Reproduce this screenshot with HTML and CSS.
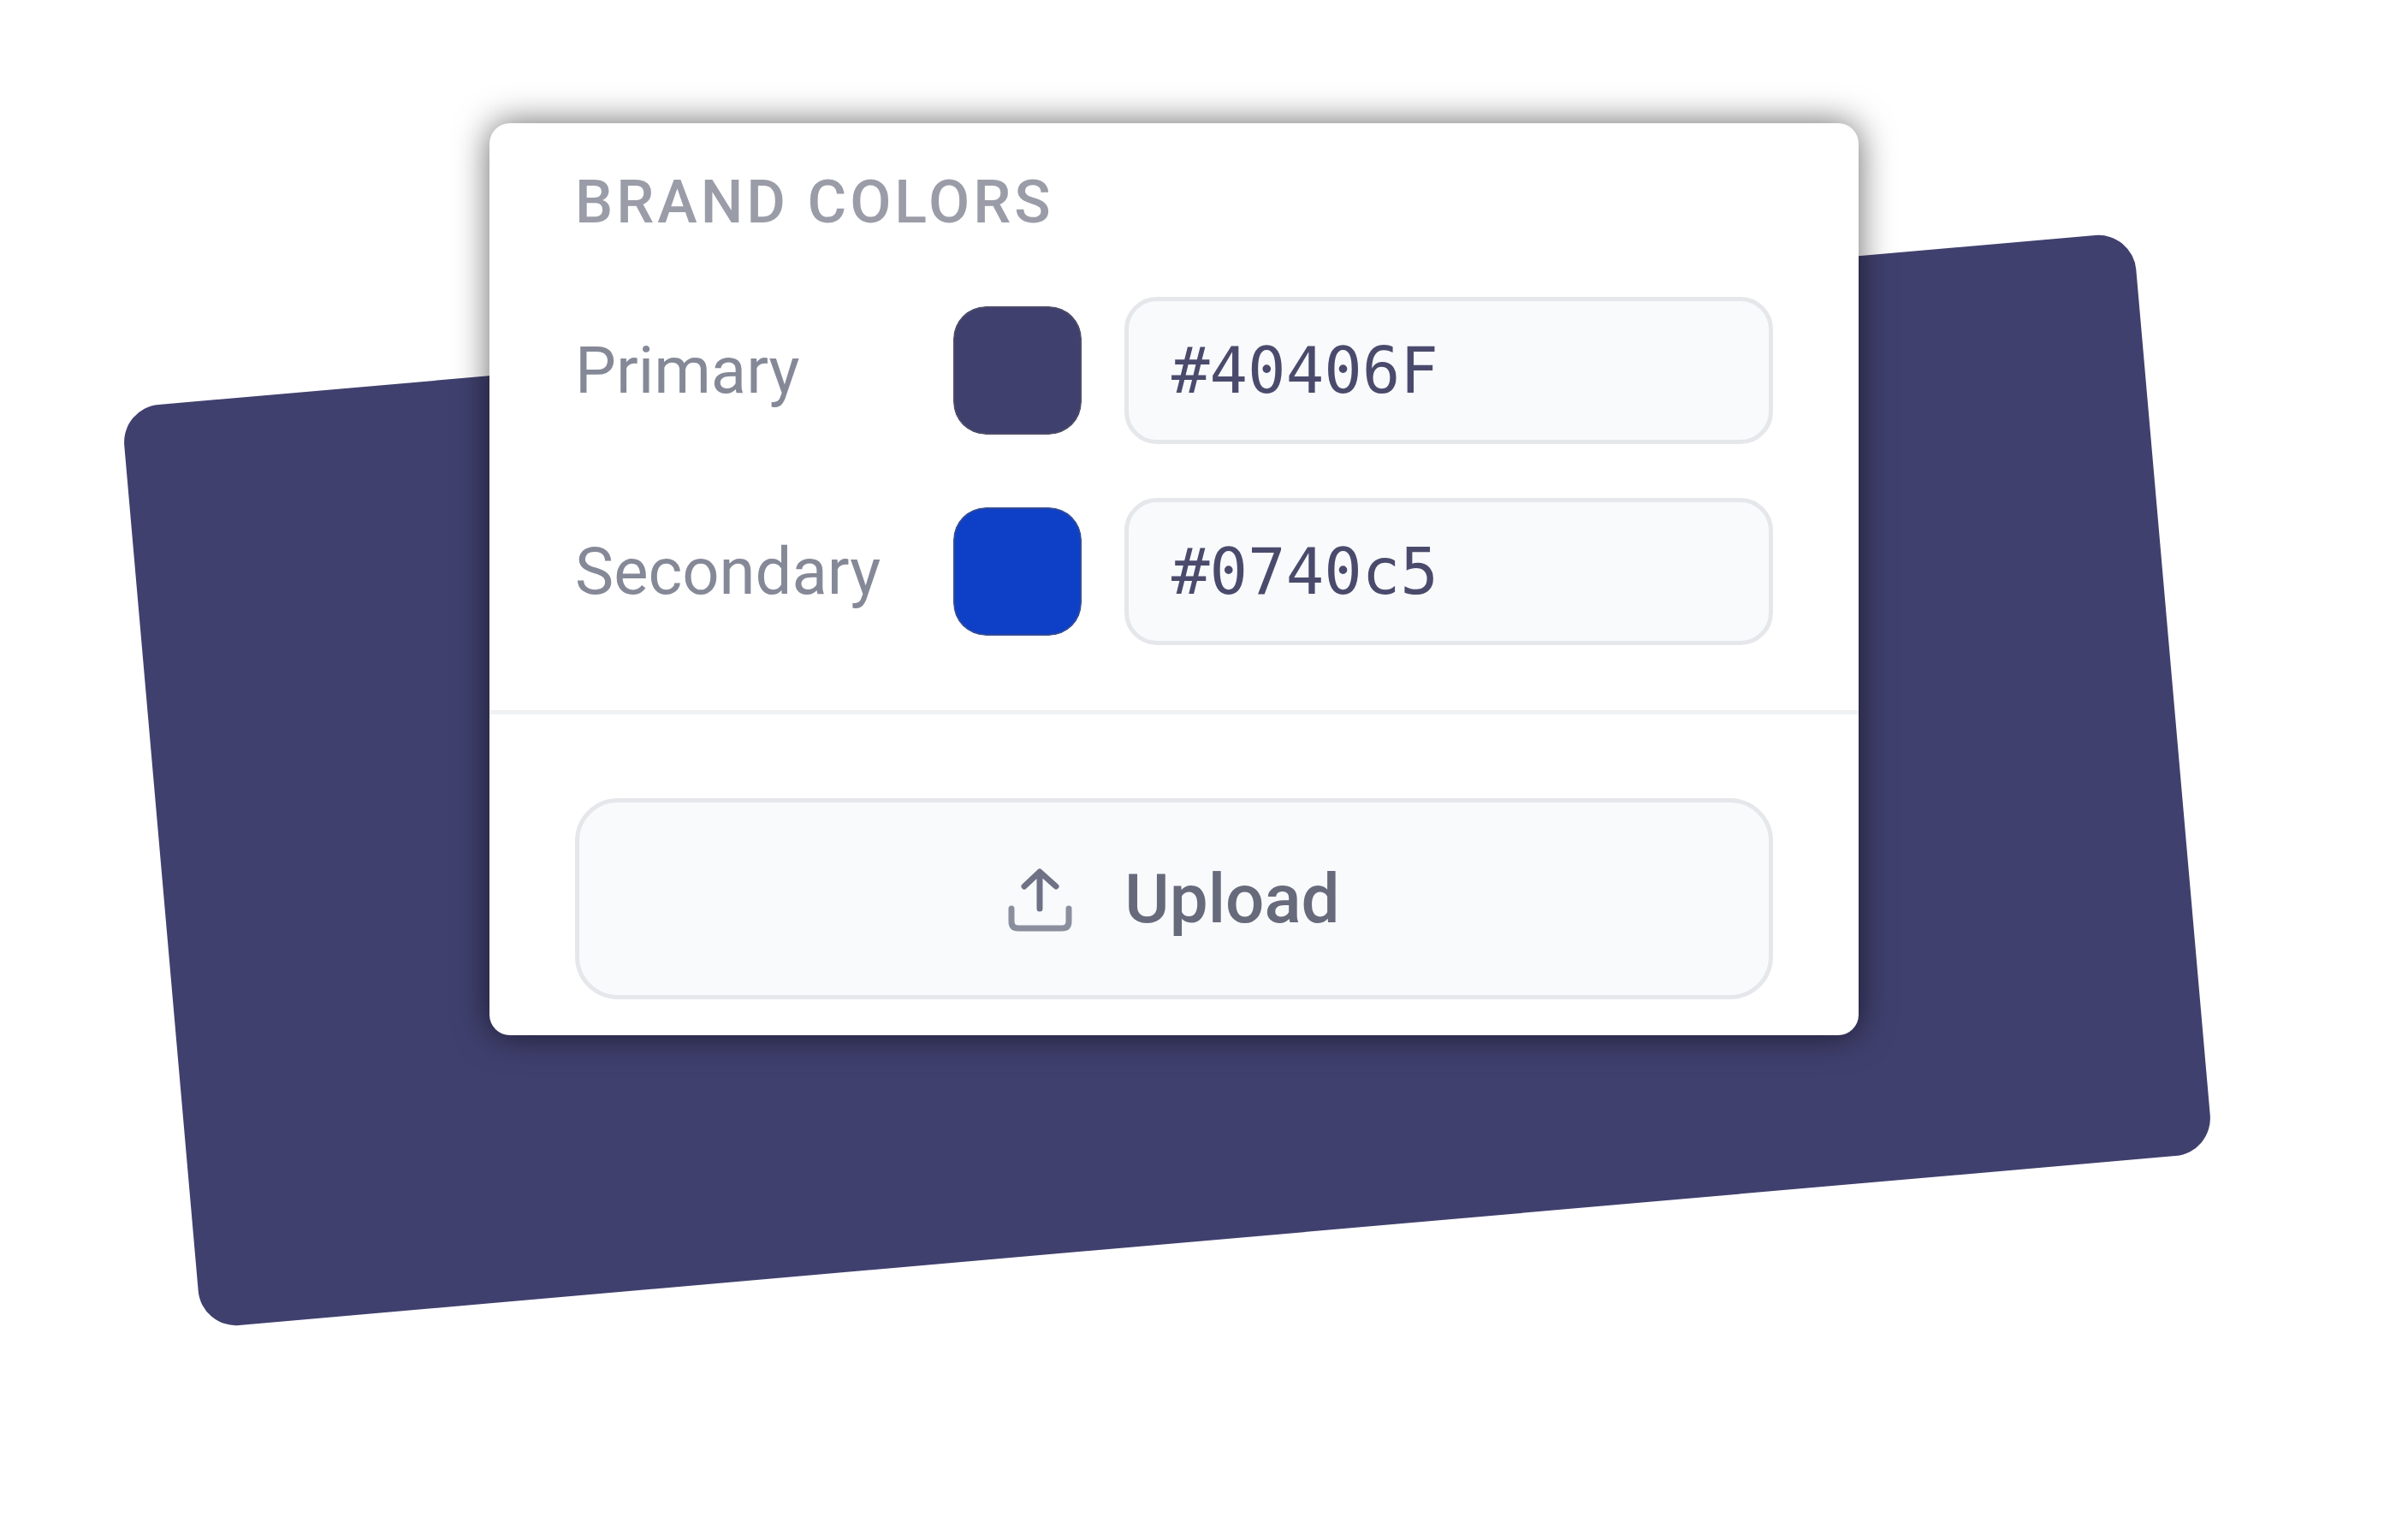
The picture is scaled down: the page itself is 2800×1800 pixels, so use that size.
FILE: index.html
```html
<!DOCTYPE html>
<html lang="en">
<head>
    <meta charset="UTF-8">
    <meta name="viewport" content="width=device-width, initial-scale=1.0">
    <title>Brand Colors</title>
    <link rel="stylesheet" href="styles.css">
</head>
<body>
    <main class="stage">
        <div class="backdrop"></div>
        <div class="panel">
            <section class="colors">
                <h2>BRAND COLORS</h2>
                <div class="color-row">
                    <label for="primary">Primary</label>
                    <input class="swatch" type="color" value="#40406f" aria-label="Primary color">
                    <input class="hex" id="primary" type="text" value="#40406F" spellcheck="false">
                </div>
                <div class="color-row">
                    <label for="secondary">Secondary</label>
                    <input class="swatch" type="color" value="#0e40c7" aria-label="Secondary color">
                    <input class="hex" id="secondary" type="text" value="#0740c5" spellcheck="false">
                </div>
            </section>
            <section class="upload">
                <button class="upload-button" type="button">
                    <svg class="upload-icon" viewBox="0 0 76 76" aria-hidden="true">
                        <path d="M4 49V64Q4 72 12 72H63Q71 72 71 64V49"/>
                        <path class="arrow" d="M37 49V7M19 23L37 6L56 23"/>
                    </svg>
                    <span>Upload</span>
                </button>
            </section>
        </div>
    </main>
</body>
</html>
```
FILE: styles.css
```css
* {
    box-sizing: border-box;
}
body {
    margin: 0;
    background: #ffffff;
    font-family: Roboto, sans-serif;
}
.stage {
    display: grid;
    align-items: start;
    min-height: 100vh;
    padding: 144px 228px 0 172px;
    overflow: hidden;
}
/* both layers share one grid cell */
.backdrop,
.panel {
    grid-area: 1 / 1;
}
.backdrop {
    height: 60vh;
    margin: 228px 28px 0 12px;
    background: #40406f;
    border-radius: 44px;
    transform: rotate(-5deg);
}
.panel {
    position: relative;
    justify-self: center;
    width: 100%;
    max-width: 1600px;
    background: #ffffff;
    border-radius: 24px;
    box-shadow: 0 0 40px rgba(0, 0, 0, 0.6);
}
.colors {
    display: flex;
    flex-direction: column;
    gap: 63px;
    padding: 52px 100px 76px;
    border-bottom: 5px solid #f0f1f3;
}
h2 {
    margin: 0 0 8px;
    color: #9a9da8;
    font-size: 70px;
    font-weight: 500;
    line-height: 80px;
    letter-spacing: 4px;
}
.color-row {
    display: flex;
    align-items: center;
    gap: 50px;
}
.color-row label {
    width: 392px;
    color: #858997;
    font-size: 76px;
    line-height: 90px;
}
.swatch {
    appearance: none;
    width: 150px;
    height: 150px;
    padding: 0;
    border: none;
    border-radius: 38px;
    background: none;
    overflow: hidden;
}
.swatch::-webkit-color-swatch-wrapper {
    padding: 0;
}
.swatch::-webkit-color-swatch {
    border: 2px solid rgba(90, 90, 100, 0.5);
    border-radius: 38px;
}
.hex {
    flex: 1;
    min-width: 0;
    height: 172px;
    padding: 0 50px;
    background: #f9fafc;
    border: 5px solid #e5e7ea;
    border-radius: 38px;
    color: #4a4b6c;
    font-family: "DejaVu Sans Mono", monospace;
    font-size: 74px;
}
.upload {
    padding: 98px 100px 42px;
}
.upload-button {
    display: flex;
    align-items: center;
    justify-content: center;
    gap: 60px;
    width: 100%;
    height: 235px;
    background: #f9fafc;
    border: 5px solid #e5e7ea;
    border-radius: 50px;
    color: #676a7b;
    font-family: inherit;
    font-size: 80px;
    font-weight: 500;
}
.upload-icon {
    width: 76px;
    height: 76px;
    fill: none;
    stroke: #8b8e9c;
    stroke-width: 7;
    stroke-linecap: round;
    stroke-linejoin: round;
}
.upload-icon .arrow {
    stroke: #6f7285;
}
```
